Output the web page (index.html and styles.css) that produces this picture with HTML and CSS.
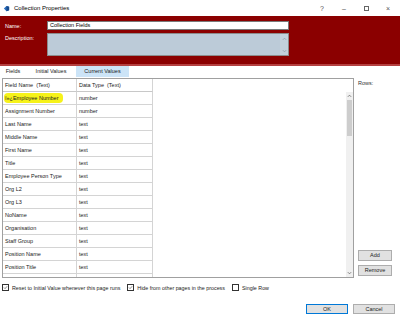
FILE: index.html
```html
<!DOCTYPE html>
<html lang="en">
<head>
<meta charset="utf-8">
<title>Collection Properties</title>
<link rel="stylesheet" href="styles.css">
</head>
<body>
<div class="window">
    <div class="titlebar">
        <svg class="app-icon" viewBox="0 0 8 8">
            <path d="M1 4 L4 1 L7 2 L7 6 L4 7 Z" fill="#2a6ebf"/>
            <path d="M4 1 L7 2 L7 6 L4 7 Z" fill="#174a8c"/>
        </svg>
        <span class="title">Collection Properties</span>
        <div class="controls">
            <span>?</span>
            <span>&#8211;</span>
            <span class="max"></span>
            <span>&#215;</span>
        </div>
    </div>

    <div class="banner">
        <div class="field-row">
            <span class="field-label">Name:</span>
            <div class="text-input">Collection Fields</div>
        </div>
        <div class="field-row">
            <span class="field-label">Description:</span>
            <div class="text-area">
                <div class="mini-scroll">
                    <svg viewBox="0 0 6 4"><path d="M1 3 L3 1 L5 3" fill="none" stroke="#8a96a0" stroke-width="0.8"/></svg>
                    <svg viewBox="0 0 6 4"><path d="M1 1 L3 3 L5 1" fill="none" stroke="#8a96a0" stroke-width="0.8"/></svg>
                </div>
            </div>
        </div>
    </div>

    <div class="tabs">
        <div class="tab tab-fields">Fields</div>
        <div class="tab tab-initial">Initial Values</div>
        <div class="tab tab-current active">Current Values</div>
    </div>

    <div class="main">
        <div class="grid">
            <div class="grid-body">
                <div class="row head">
                    <div class="cell c1">Field Name&nbsp; (Text)</div>
                    <div class="cell c2">Data Type&nbsp; (Text)</div>
                </div>
                <div class="row">
                    <div class="cell c1"><span class="marker">ï»¿Employee Number</span></div>
                    <div class="cell c2">number</div>
                </div>
                <div class="row"><div class="cell c1">Assignment Number</div><div class="cell c2">number</div></div>
                <div class="row"><div class="cell c1">Last Name</div><div class="cell c2">text</div></div>
                <div class="row"><div class="cell c1">Middle Name</div><div class="cell c2">text</div></div>
                <div class="row"><div class="cell c1">First Name</div><div class="cell c2">text</div></div>
                <div class="row"><div class="cell c1">Title</div><div class="cell c2">text</div></div>
                <div class="row"><div class="cell c1">Employee Person Type</div><div class="cell c2">text</div></div>
                <div class="row"><div class="cell c1">Org L2</div><div class="cell c2">text</div></div>
                <div class="row"><div class="cell c1">Org L3</div><div class="cell c2">text</div></div>
                <div class="row"><div class="cell c1">NoName</div><div class="cell c2">text</div></div>
                <div class="row"><div class="cell c1">Organisation</div><div class="cell c2">text</div></div>
                <div class="row"><div class="cell c1">Staff Group</div><div class="cell c2">text</div></div>
                <div class="row"><div class="cell c1">Position Name</div><div class="cell c2">text</div></div>
                <div class="row"><div class="cell c1">Position Title</div><div class="cell c2">text</div></div>
                <div class="row"><div class="cell c1">Occupation Code</div><div class="cell c2">text</div></div>
            </div>
            <div class="vscroll">
                <div class="vs-top">
                    <svg viewBox="0 0 6 4"><path d="M1 3 L3 1 L5 3" fill="none" stroke="#606060" stroke-width="0.9"/></svg>
                </div>
                <div class="vs-thumb"></div>
                <div class="vs-track"></div>
                <div class="vs-bottom">
                    <svg viewBox="0 0 6 4"><path d="M1 1 L3 3 L5 1" fill="none" stroke="#606060" stroke-width="0.9"/></svg>
                </div>
            </div>
        </div>

        <div class="side">
            <div class="rows-label">Rows:</div>
            <div class="side-buttons">
                <div class="btn small">Add</div>
                <div class="btn small">Remove</div>
            </div>
        </div>
    </div>

    <div class="options">
        <div class="check opt-reset">
            <span class="box"><svg viewBox="0 0 8 8"><path d="M1.5 4 L3.3 5.8 L6.6 2" fill="none" stroke="#333" stroke-width="0.9"/></svg></span>
            <span class="check-text">Reset to Initial Value whenever this page runs</span>
        </div>
        <div class="check opt-hide">
            <span class="box"><svg viewBox="0 0 8 8"><path d="M1.5 4 L3.3 5.8 L6.6 2" fill="none" stroke="#333" stroke-width="0.9"/></svg></span>
            <span class="check-text">Hide from other pages in the process</span>
        </div>
        <div class="check">
            <span class="box"></span>
            <span class="check-text">Single Row</span>
        </div>
    </div>

    <div class="footer">
        <div class="btn primary">OK</div>
        <div class="btn">Cancel</div>
    </div>
</div>
</body>
</html>
```

FILE: styles.css
```css
body {
    margin: 0;
    background: #fff;
    font-family: "Liberation Sans", Arial, sans-serif;
    font-size: 5.5px;
    color: #222;
}

.window {
    width: 400px;
    height: 316px;
    display: flex;
    flex-direction: column;
    overflow: hidden;
}

/* title bar */
.titlebar {
    height: 16px;
    display: flex;
    align-items: center;
    padding-left: 3px;
    flex-shrink: 0;
}

.app-icon {
    width: 7px;
    height: 7px;
    margin-right: 4px;
}

.title {
    font-size: 6px;
    color: #000;
}

.controls {
    margin-left: auto;
    display: flex;
    align-items: center;
    padding-right: 1px;
}

.controls span {
    width: 22px;
    text-align: center;
    font-size: 7px;
    color: #555;
}

.controls .max {
    width: 5px;
    height: 5px;
    margin: 0 8px 0 9px;
    border: 1px solid #666;
    box-sizing: border-box;
}

/* red banner */
.banner {
    height: 43px;
    background: #8b0000;
    border-bottom: 2px solid #b44040;
    padding: 5px 0 0 5px;
    flex-shrink: 0;
}

.field-row {
    display: flex;
    margin-bottom: 3px;
}

.field-label {
    width: 42px;
    color: #fff;
    padding-top: 2px;
}

.text-input {
    width: 242px;
    height: 9px;
    background: #fff;
    border: 1px solid #7a7a7a;
    box-sizing: border-box;
    padding-left: 2px;
    line-height: 7px;
    color: #000;
}

.text-area {
    width: 242px;
    height: 23px;
    background: #bccbd8;
    border: 1px solid #8c8c8c;
    box-sizing: border-box;
    display: flex;
    justify-content: flex-end;
}

.mini-scroll {
    width: 8px;
    display: flex;
    flex-direction: column;
    justify-content: space-between;
    align-items: center;
    padding: 3px 0 2px;
    background: #c3d1dc;
}

.mini-scroll svg {
    width: 5px;
    height: 4px;
}

/* tabs */
.tabs {
    height: 11px;
    display: flex;
    flex-shrink: 0;
}

.tab {
    text-align: center;
    line-height: 11px;
    color: #222;
}

.tab-fields { width: 26px; }
.tab-initial { width: 50px; }
.tab-current { width: 53px; }

.tab.active {
    background: #cce4f7;
}

/* main area */
.main {
    height: 200px;
    margin-top: 1px;
    display: flex;
    flex-shrink: 0;
}

.grid {
    width: 352px;
    margin-left: 2px;
    border: 1px solid #a0a0a0;
    box-sizing: border-box;
    display: flex;
    overflow: hidden;
}

.grid-body {
    flex: 1;
    overflow: hidden;
}

.row {
    display: flex;
    height: 13px;
}

.cell {
    height: 13px;
    box-sizing: border-box;
    border-right: 1px solid #d4d4d4;
    border-bottom: 1px solid #d4d4d4;
    padding-left: 2px;
    line-height: 12px;
    white-space: nowrap;
    overflow: hidden;
}

.c1 { width: 74px; }
.c2 { width: 76px; }

.head .cell {
    border-bottom-color: #c8c8c8;
}

.marker {
    background: #f6f21a;
    border-radius: 4px;
    padding: 2px 4px 2px 1px;
    margin-left: -1px;
}

.vscroll {
    width: 7px;
    display: flex;
    flex-direction: column;
    padding-top: 13px;
    background: linear-gradient(#fff 13px, #f0f0f0 13px);
}

.vs-top, .vs-bottom {
    height: 8px;
    display: flex;
    align-items: center;
    justify-content: center;
}

.vscroll svg {
    width: 5px;
    height: 4px;
}

.vs-thumb {
    height: 36px;
    margin: 0 1px;
    background: #cdcdcd;
}

.vs-track {
    flex: 1;
}

/* side panel */
.side {
    width: 36px;
    margin-left: 4px;
    display: flex;
    flex-direction: column;
    justify-content: space-between;
    padding: 2px 0 2px;
}

.rows-label {
    color: #333;
}

.side-buttons {
    display: flex;
    flex-direction: column;
    gap: 4px;
}

.btn {
    width: 42px;
    height: 10px;
    background: #e1e1e1;
    border: 1px solid #adadad;
    box-sizing: border-box;
    text-align: center;
    line-height: 8px;
    color: #222;
}

.btn.small {
    width: 34px;
    height: 11px;
    line-height: 9px;
}

.btn.primary {
    border-color: #0078d7;
}

/* options */
.options {
    height: 19px;
    display: flex;
    align-items: center;
    padding-left: 2px;
    flex-shrink: 0;
}

.check {
    display: flex;
    align-items: center;
    color: #222;
    white-space: nowrap;
}

.check-text {
    font-size: 5.35px;
    line-height: 8px;
}

.opt-reset { margin-right: 7px; }
.opt-hide { margin-right: 7px; }

.box {
    width: 7px;
    height: 7px;
    border: 1px solid #333;
    box-sizing: border-box;
    background: #fff;
    margin-right: 3px;
    display: flex;
    flex-shrink: 0;
}

.box svg {
    width: 100%;
    height: 100%;
}

/* footer buttons */
.footer {
    margin-top: auto;
    display: flex;
    justify-content: flex-end;
    gap: 5px;
    padding: 0 5px 2px 0;
}
```
